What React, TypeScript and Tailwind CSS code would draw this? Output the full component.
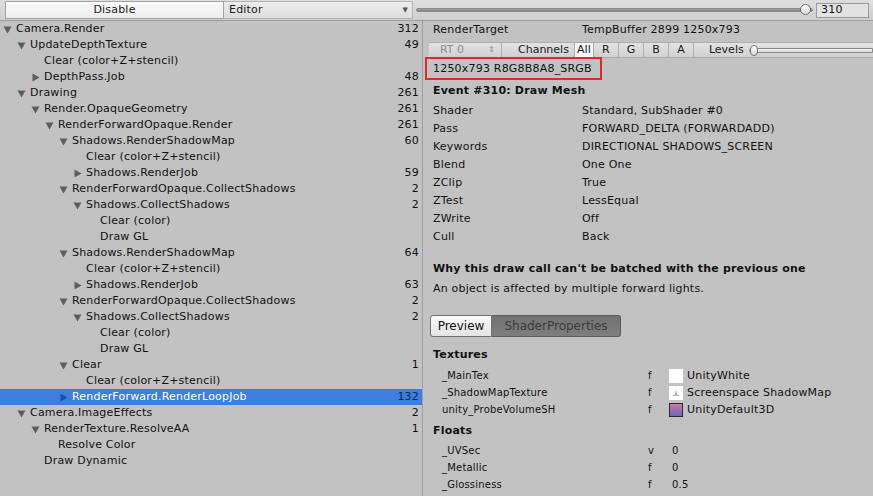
import type { CSSProperties } from "react";

type Node = {
  label: string;
  depth: number;
  count?: number;
  arrow?: "down" | "right";
  selected?: boolean;
};

const TREE: Node[] = [
  { label: "Camera.Render", depth: 0, count: 312, arrow: "down" },
  { label: "UpdateDepthTexture", depth: 1, count: 49, arrow: "down" },
  { label: "Clear (color+Z+stencil)", depth: 2 },
  { label: "DepthPass.Job", depth: 2, count: 48, arrow: "right" },
  { label: "Drawing", depth: 1, count: 261, arrow: "down" },
  { label: "Render.OpaqueGeometry", depth: 2, count: 261, arrow: "down" },
  { label: "RenderForwardOpaque.Render", depth: 3, count: 261, arrow: "down" },
  { label: "Shadows.RenderShadowMap", depth: 4, count: 60, arrow: "down" },
  { label: "Clear (color+Z+stencil)", depth: 5 },
  { label: "Shadows.RenderJob", depth: 5, count: 59, arrow: "right" },
  { label: "RenderForwardOpaque.CollectShadows", depth: 4, count: 2, arrow: "down" },
  { label: "Shadows.CollectShadows", depth: 5, count: 2, arrow: "down" },
  { label: "Clear (color)", depth: 6 },
  { label: "Draw GL", depth: 6 },
  { label: "Shadows.RenderShadowMap", depth: 4, count: 64, arrow: "down" },
  { label: "Clear (color+Z+stencil)", depth: 5 },
  { label: "Shadows.RenderJob", depth: 5, count: 63, arrow: "right" },
  { label: "RenderForwardOpaque.CollectShadows", depth: 4, count: 2, arrow: "down" },
  { label: "Shadows.CollectShadows", depth: 5, count: 2, arrow: "down" },
  { label: "Clear (color)", depth: 6 },
  { label: "Draw GL", depth: 6 },
  { label: "Clear", depth: 4, count: 1, arrow: "down" },
  { label: "Clear (color+Z+stencil)", depth: 5 },
  { label: "RenderForward.RenderLoopJob", depth: 4, count: 132, arrow: "right", selected: true },
  { label: "Camera.ImageEffects", depth: 1, count: 2, arrow: "down" },
  { label: "RenderTexture.ResolveAA", depth: 2, count: 1, arrow: "down" },
  { label: "Resolve Color", depth: 3 },
  { label: "Draw Dynamic", depth: 2 },
];

const STATE: [string, string][] = [
  ["Shader", "Standard, SubShader #0"],
  ["Pass", "FORWARD_DELTA (FORWARDADD)"],
  ["Keywords", "DIRECTIONAL SHADOWS_SCREEN"],
  ["Blend", "One One"],
  ["ZClip", "True"],
  ["ZTest", "LessEqual"],
  ["ZWrite", "Off"],
  ["Cull", "Back"],
];

const TEXTURES: [string, "white" | "shadow" | "default3d", string][] = [
  ["_MainTex", "white", "UnityWhite"],
  ["_ShadowMapTexture", "shadow", "Screenspace ShadowMap"],
  ["unity_ProbeVolumeSH", "default3d", "UnityDefault3D"],
];

const FLOATS: [string, string, string][] = [
  ["_UVSec", "v", "0"],
  ["_Metallic", "f", "0"],
  ["_Glossiness", "f", "0.5"],
];

function Arrow({ dir, selected }: { dir: "down" | "right"; selected?: boolean }) {
  const fill = selected ? "#1f4f9c" : "#5e5e5e";
  return (
    <svg width="9" height="9" viewBox="0 0 9 9" className="shrink-0">
      {dir === "down" ? (
        <path d="M0.5 1.5h8L4.5 8.5z" fill={fill} />
      ) : (
        <path d="M1.5 0.5v8l7-4z" fill={fill} />
      )}
    </svg>
  );
}

function TreeRow({ node }: { node: Node }) {
  const indent: CSSProperties = { paddingLeft: 3 + node.depth * 14 };
  return (
    <div
      className={`flex h-4 items-center pr-[3px] ${
        node.selected ? "bg-[#3d7ee0] text-white" : "text-[#111]"
      }`}
    >
      <div className="flex flex-1 items-center" style={indent}>
        <span className="flex w-[13px] items-center">
          {node.arrow && <Arrow dir={node.arrow} selected={node.selected} />}
        </span>
        <span className="whitespace-nowrap">{node.label}</span>
      </div>
      {node.count !== undefined && (
        <span className={node.selected ? "text-[#10244a]" : ""}>{node.count}</span>
      )}
    </div>
  );
}

function TopBar() {
  return (
    <div className="flex h-[21px] shrink-0 items-center border-b border-[#9d9d9d] bg-gradient-to-b from-[#dedede] to-[#cfcfcf] pl-[5px] pr-1">
      <button className="h-[18px] w-[219px] border border-[#a3a3a3] bg-gradient-to-b from-[#fafafa] to-[#ececec] text-center text-[#1a1a1a]">
        Disable
      </button>
      <div className="flex h-[18px] w-[189px] items-center justify-between border-y border-r border-[#b4b4b4] bg-gradient-to-b from-[#ececec] to-[#dddddd] pl-[5px] pr-[4px] text-[#1a1a1a]">
        <span>Editor</span>
        <span className="text-[7px] text-[#555]">▼</span>
      </div>
      <div className="relative ml-[3px] flex h-full w-[397px] items-center">
        <div className="h-[4px] w-full rounded-full border border-[#8a8a8a] bg-gradient-to-b from-[#a5a5a5] to-[#7c7c7c]" />
        <div className="absolute left-[384px] top-[4px] h-[11px] w-[11px] rounded-full border border-[#6e6e6e] bg-gradient-to-b from-[#ffffff] to-[#dcdcdc]" />
      </div>
      <div className="ml-[3px] flex h-[15px] w-[53px] items-center border border-[#9a9a9a] bg-[#e2e2e2] pl-[4px] text-[#111]">
        310
      </div>
    </div>
  );
}

function ChannelBar() {
  const chans = ["R", "G", "B", "A"];
  return (
    <div className="ml-[6px] flex h-4 items-center border-y border-[#adadad] bg-gradient-to-b from-[#e3e3e3] to-[#d0d0d0] tracking-normal text-[#1a1a1a]">
      <div className="flex h-full w-[73px] items-center justify-between border-r border-[#aeaeae] pl-[11px] pr-[6px] text-[#8c8c8c]">
        <span>RT 0</span>
        <span className="text-[8px] leading-none">⇕</span>
      </div>
      <span className="ml-[16px]">Channels</span>
      <div className="ml-[5px] flex h-full w-[20px] items-center justify-center border-x border-[#a8a8a8] bg-[#f6f6f6]">
        All
      </div>
      {chans.map((c) => (
        <div
          key={c}
          className="flex h-full w-[25px] items-center justify-center border-r border-[#b0b0b0]"
        >
          {c}
        </div>
      ))}
      <span className="ml-[15px]">Levels</span>
      <div className="relative ml-[5px] flex h-full flex-1 items-center">
        <div className="h-[5px] w-full rounded-l-full border border-[#8c8c8c] bg-gradient-to-b from-[#f4f4f4] to-[#d8d8d8]" />
        <div className="absolute left-[1px] top-[2px] h-[11px] w-[8px] rounded-full border border-[#777] bg-gradient-to-b from-[#ffffff] to-[#d5d5d5]" />
      </div>
    </div>
  );
}

function Swatch({ kind }: { kind: "white" | "shadow" | "default3d" }) {
  if (kind === "white") return <span className="h-[14px] w-[14px] bg-white" />;
  if (kind === "shadow")
    return (
      <span className="flex h-[14px] w-[14px] items-end justify-center bg-white pb-[2px] text-[7px] leading-none tracking-normal text-black">
        .i.
      </span>
    );
  return (
    <span className="h-[14px] w-[14px] border border-[#2b2b2b] bg-gradient-to-b from-[#d07aa6] via-[#9a6cb4] to-[#6f67b8]" />
  );
}

export default function App() {
  return (
    <div
      className="flex h-[496px] w-[873px] flex-col overflow-hidden bg-[#c2c2c2] text-[11px] leading-4 tracking-[0.2px] text-[#111]"
      style={{ fontFamily: '"DejaVu Sans", Verdana, sans-serif' }}
    >
      <TopBar />
      <div className="flex flex-1">
        {/* Event tree */}
        <div className="w-[423px] shrink-0 border-r border-[#9e9e9e]">
          {TREE.map((n, i) => (
            <TreeRow key={i} node={n} />
          ))}
        </div>

        {/* Event details */}
        <div className="flex flex-1 flex-col">
          <div className="flex h-[18px] items-center pl-[10px]">
            <span className="w-[149px]">RenderTarget</span>
            <span>TempBuffer 2899 1250x793</span>
          </div>
          <div className="mt-[3px]">
            <ChannelBar />
          </div>
          <div className="ml-[2px] mt-[-1px] flex h-[23px] w-[177px] items-center border-2 border-[#e3262a] pl-[6px]">
            1250x793 R8G8B8A8_SRGB
          </div>

          <div className="mt-[2px] flex h-[18px] items-center pl-[10px] font-bold">
            Event #310: Draw Mesh
          </div>
          <div className="mt-[2px]">
            {STATE.map(([k, v]) => (
              <div key={k} className="flex h-[18px] items-center pl-[10px]">
                <span className="w-[149px]">{k}</span>
                <span>{v}</span>
              </div>
            ))}
          </div>

          <div className="mt-[14px] flex h-[18px] items-center pl-[10px] font-bold">
            Why this draw call can't be batched with the previous one
          </div>
          <div className="mt-[2px] flex h-[18px] items-center pl-[10px]">
            An object is affected by multiple forward lights.
          </div>

          <div className="ml-[7px] mt-[17px] flex h-[22px]">
            <div className="flex w-[62px] items-center justify-center rounded-l-[3px] border border-[#6f6f6f] bg-gradient-to-b from-[#fbfbfb] to-[#e4e4e4] text-[12px] tracking-normal">
              Preview
            </div>
            <div className="flex w-[129px] items-center justify-center rounded-r-[3px] border border-l-0 border-[#5a5a5a] bg-gradient-to-b from-[#727272] to-[#7e7e7e] text-[12px] tracking-normal text-[#3c3c3c]">
              ShaderProperties
            </div>
          </div>

          <div className="mt-[9px] flex h-[18px] items-center pl-[10px] font-bold">Textures</div>
          <div className="mt-[3px] text-[10px]">
            {TEXTURES.map(([name, kind, label]) => (
              <div key={name} className="flex h-[17px] items-center pl-[19px]">
                <span className="w-[206px]">{name}</span>
                <span className="w-[21px]">f</span>
                <Swatch kind={kind} />
                <span className="ml-[4px] text-[11px]">{label}</span>
              </div>
            ))}
          </div>

          <div className="mt-[4px] flex h-[18px] items-center pl-[10px] font-bold">Floats</div>
          <div className="mt-[2px] text-[10px]">
            {FLOATS.map(([name, t, v]) => (
              <div key={name} className="flex h-[17px] items-center pl-[19px]">
                <span className="w-[206px]">{name}</span>
                <span className="w-[24px]">{t}</span>
                <span>{v}</span>
              </div>
            ))}
          </div>
        </div>
      </div>
    </div>
  );
}
